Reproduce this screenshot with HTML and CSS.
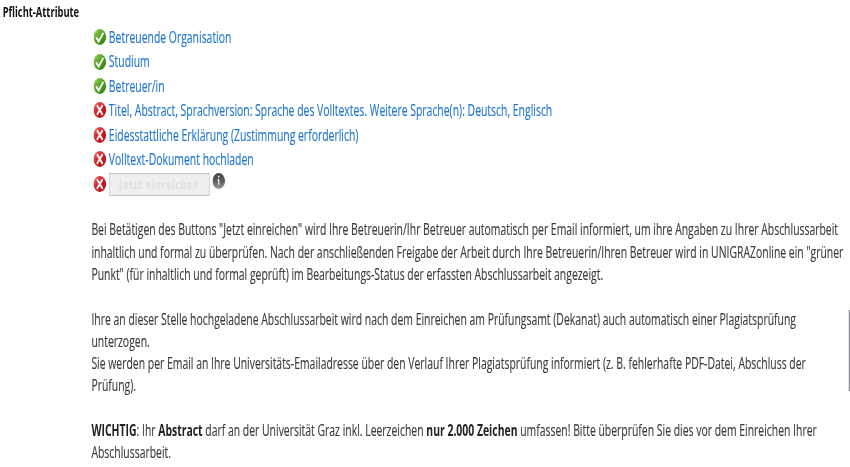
FILE: index.html
```html
<!DOCTYPE html>
<html lang="de">
<head>
    <meta charset="UTF-8">
    <title>Abschlussarbeit einreichen</title>
    <link rel="stylesheet" href="styles.css">
</head>
<body>

    <svg class="defs" width="0" height="0">
        <defs>
            <linearGradient id="green" x1="0" y1="0" x2="1" y2="1">
                <stop offset="0" stop-color="#a4d868"/>
                <stop offset="0.5" stop-color="#4fa01f"/>
                <stop offset="1" stop-color="#2f7a10"/>
            </linearGradient>
            <linearGradient id="red" x1="0" y1="0" x2="1" y2="1">
                <stop offset="0" stop-color="#ee7070"/>
                <stop offset="0.5" stop-color="#cf1c20"/>
                <stop offset="1" stop-color="#b00c12"/>
            </linearGradient>
            <linearGradient id="gray" x1="0" y1="0" x2="0" y2="1">
                <stop offset="0" stop-color="#444"/>
                <stop offset="0.5" stop-color="#5c5c5c"/>
                <stop offset="1" stop-color="#999"/>
            </linearGradient>
            <symbol id="ok" viewBox="0 0 16 16" preserveAspectRatio="none">
                <circle cx="8" cy="8" r="7.9" fill="url(#green)"/>
                <path d="M3.4 8.4l3.2 4 5.8-8.6" fill="none" stroke="#fff" stroke-width="2.2"/>
            </symbol>
            <symbol id="error" viewBox="0 0 16 16" preserveAspectRatio="none">
                <circle cx="8" cy="8" r="7.9" fill="url(#red)"/>
                <path d="M4.4 3.2l7.2 9.6M11.6 3.2l-7.2 9.6" fill="none" stroke="#fff" stroke-width="2.2"/>
            </symbol>
            <symbol id="info" viewBox="0 0 16 16" preserveAspectRatio="none">
                <circle cx="8" cy="8" r="7.9" fill="url(#gray)"/>
                <path d="M8 2.8v2M8 6.2v5.6M6.6 7h1.4" fill="none" stroke="#ddd" stroke-width="1.8"/>
            </symbol>
        </defs>
    </svg>

    <div class="page">
        <div class="label">Pflicht-Attribute</div>
        <div class="content">
            <ul class="checks">
                <li><svg class="icon"><use href="#ok"/></svg><a href="#">Betreuende Organisation</a></li>
                <li><svg class="icon"><use href="#ok"/></svg><a href="#">Studium</a></li>
                <li><svg class="icon"><use href="#ok"/></svg><a href="#">Betreuer/in</a></li>
                <li><svg class="icon"><use href="#error"/></svg><a href="#">Titel, Abstract, Sprachversion: Sprache des Volltextes. Weitere Sprache(n): Deutsch, Englisch</a></li>
                <li><svg class="icon"><use href="#error"/></svg><a href="#">Eidesstattliche Erklärung (Zustimmung erforderlich)</a></li>
                <li><svg class="icon"><use href="#error"/></svg><a href="#">Volltext-Dokument hochladen</a></li>
                <li><svg class="icon"><use href="#error"/></svg><button class="submit" disabled>Jetzt einreichen</button><svg class="icon info"><use href="#info"/></svg></li>
            </ul>
            <p>Bei Betätigen des Buttons "Jetzt einreichen" wird Ihre Betreuerin/Ihr Betreuer automatisch per Email informiert, um ihre Angaben zu Ihrer Abschlussarbeit<br>
            inhaltlich und formal zu überprüfen. Nach der anschließenden Freigabe der Arbeit durch Ihre Betreuerin/Ihren Betreuer wird in UNIGRAZonline ein "grüner<br>
            Punkt" (für inhaltlich und formal geprüft) im Bearbeitungs-Status der erfassten Abschlussarbeit angezeigt.</p>
            <p class="plagiat">Ihre an dieser Stelle hochgeladene Abschlussarbeit wird nach dem Einreichen am Prüfungsamt (Dekanat) auch automatisch einer Plagiatsprüfung<br>
            unterzogen.<br>
            Sie werden per Email an Ihre Universitäts-Emailadresse über den Verlauf Ihrer Plagiatsprüfung informiert (z. B. fehlerhafte PDF-Datei, Abschluss der<br>
            Prüfung).</p>
            <p><b>WICHTIG</b>: Ihr <b>Abstract</b> darf an der Universität Graz inkl. Leerzeichen <b>nur 2.000 Zeichen</b> umfassen! Bitte überprüfen Sie dies vor dem Einreichen Ihrer<br>
            Abschlussarbeit.</p>
        </div>
    </div>

</body>
</html>
```

FILE: styles.css
```css
html {
    overflow: hidden;
}
body {
    margin: 0;
    width: 850px;
    height: 467px;
    overflow: hidden;
    background: #fff;
    font-family: "Open Sans", "Noto Sans", sans-serif;
}
.defs {
    display: block;
}
/* condensed page: everything is drawn at 67.2% width */
.page {
    display: flex;
    width: calc(850px / 0.672);
    height: 467px;
    transform: scaleX(0.672);
    transform-origin: 0 0;
}
.label {
    flex: none;
    box-sizing: border-box;
    width: 136px;
    padding: 2px 0 0 4px;
    font-size: 13.9px;
    line-height: 20px;
    font-weight: bold;
    color: #111;
}
.content {
    flex: 1;
    padding-top: 25px;
    font-size: 15.5px;
    line-height: 22.3px;
    color: #3c3c3c;
    white-space: nowrap;
    -webkit-text-stroke: 0.15px;
}
.checks {
    list-style: none;
    margin: 0 0 22.6px;
    padding: 0 0 0 3px;
}
.checks li {
    display: flex;
    align-items: center;
    height: 24.4px;
}
.icon {
    flex: none;
    width: 19px;
    height: 16px;
    margin-right: 4px;
}
.info {
    margin: -6px 0 0 4px;
}
.checks a {
    color: #2277cc;
    text-decoration: none;
}
.submit {
    width: 150px;
    height: 23px;
    margin-top: 1px;
    padding: 0;
    border: 1px solid #c4c4c4;
    background: #efefef;
    color: #e2e2e2;
    font: bold 12px "Open Sans", sans-serif;
    letter-spacing: 1.5px;
}
p {
    margin: 0 0 22.3px;
}
.plagiat {
    background: linear-gradient(#8c929c, #8c929c) right 2px / 2px 81px no-repeat;
}
b {
    color: #222;
    -webkit-text-stroke: 0;
}
```
